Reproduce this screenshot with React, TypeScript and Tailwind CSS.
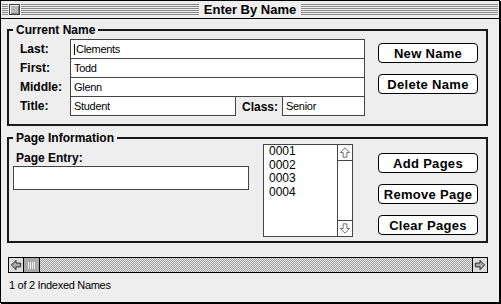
import React from 'react';

const labelCls = 'font-bold text-[12px] leading-[14px] text-black';
const valueCls = 'text-[11px] tracking-[-0.3px] text-black leading-none';

const MacButton: React.FC<{ label: string }> = ({ label }) => (
  <button
    type="button"
    className="w-[100px] h-[20px] bg-white border border-black rounded-[4px] font-bold text-[13px] tracking-[0.3px] leading-none text-black flex items-center justify-center"
  >
    {label}
  </button>
);

const GroupBox: React.FC<{ title: string; className: string; children: React.ReactNode }> = ({ title, className, children }) => (
  <fieldset className={`w-[481px] border-2 border-[#1a1a1a] ${className}`}>
    <legend className={`ml-[4px] px-[3px] ${labelCls}`}>{title}</legend>
    {children}
  </fieldset>
);

const Field: React.FC<{ value?: string; caret?: boolean; className: string }> = ({ value, caret, className }) => (
  <div className={`h-[20px] bg-white border border-[#444] flex items-center pl-[3px] ${className}`}>
    {caret && <span className="w-[1px] h-[11px] bg-black mr-[1px]" />}
    <span className={valueCls}>{value}</span>
  </div>
);

const HArrow: React.FC<{ dir: 'left' | 'right' }> = ({ dir }) => (
  <svg width="15" height="14" viewBox="0 0 15 14" className={dir === 'right' ? 'rotate-180' : ''}>
    <path d="M2.5 7 L7.5 2 L7.5 5 L12.5 5 L12.5 9 L7.5 9 L7.5 12 Z" fill="#a8a8a8" stroke="#222" strokeWidth="1" />
  </svg>
);

const VArrow: React.FC<{ dir: 'up' | 'down' }> = ({ dir }) => (
  <svg width="15" height="15" viewBox="0 0 15 15" className={dir === 'down' ? 'rotate-180' : ''}>
    <path d="M7.5 2.5 L12.5 7.5 L9.5 7.5 L9.5 12.5 L5.5 12.5 L5.5 7.5 L2.5 7.5 Z" fill="white" stroke="#666" strokeWidth="1" />
  </svg>
);

const stripes = 'h-[11px] bg-[repeating-linear-gradient(to_bottom,#8a8a8a_0px,#8a8a8a_1px,transparent_1px,transparent_2px)]';

export default function App() {
  return (
    <div className="w-[501px] h-[304px] bg-white font-['Liberation_Sans',Arial,sans-serif]">
      <div className="w-[500px] h-[303px] border border-black shadow-[1px_1px_0_#000] bg-[#eeeeee] flex flex-col">
        {/* title bar */}
        <div className="h-[18px] border-b border-black flex items-center px-[1px]">
          <div className="flex-1 flex items-center">
            <div className={`w-[6px] ${stripes}`} />
            <div className="px-[1px]">
              <div className="w-[11px] h-[11px] border border-[#444] bg-[#b8b8b8] shadow-[inset_1px_1px_0_#f4f4f4,inset_-1px_-1px_0_#7a7a7a]" />
            </div>
            <div className={`flex-1 ${stripes}`} />
          </div>
          <div className="px-[5px] font-bold text-[13px] leading-none text-black">Enter By Name</div>
          <div className={`flex-1 ${stripes}`} />
        </div>

        <div className="flex-1 flex flex-col pl-[6px]">
          <GroupBox title="Current Name" className="mt-[4px] h-[103px]">
            <div className="flex pt-[2px]">
              <div className="flex flex-col pl-[11px]">
                <div className="flex items-center">
                  <span className={`w-[50px] ${labelCls}`}>Last:</span>
                  <Field className="w-[295px]" value="Clements" caret />
                </div>
                <div className="flex items-center -mt-[1px]">
                  <span className={`w-[50px] ${labelCls}`}>First:</span>
                  <Field className="w-[295px]" value="Todd" />
                </div>
                <div className="flex items-center -mt-[1px]">
                  <span className={`w-[50px] ${labelCls}`}>Middle:</span>
                  <Field className="w-[295px]" value="Glenn" />
                </div>
                <div className="flex items-center -mt-[1px]">
                  <span className={`w-[50px] ${labelCls}`}>Title:</span>
                  <Field className="w-[166px]" value="Student" />
                  <span className={`w-[40px] ml-[6px] pt-[1px] ${labelCls}`}>Class:</span>
                  <Field className="w-[83px]" value="Senior" />
                </div>
              </div>
              <div className="flex flex-col gap-[11px] ml-[13px] mt-[4px]">
                <MacButton label="New Name" />
                <MacButton label="Delete Name" />
              </div>
            </div>
          </GroupBox>

          <GroupBox title="Page Information" className="mt-[5px] h-[112px]">
            <div className="flex">
              <div className="flex flex-col ml-[4px] mt-[6px]">
                <span className={`ml-[3px] ${labelCls}`}>Page Entry:</span>
                <div className="mt-[1px] w-[236px] h-[24px] bg-white border border-[#444]" />
              </div>
              <div className="ml-[14px] -mt-[1px] w-[90px] h-[93px] bg-white border border-[#444] flex">
                <div className="flex-1 pl-[5px] text-[12px] leading-[13.5px] text-black">
                  <div>0001</div>
                  <div>0002</div>
                  <div>0003</div>
                  <div>0004</div>
                </div>
                <div className="w-[15px] border-l border-[#444] flex flex-col justify-between">
                  <div className="h-[16px] border-b border-[#444] flex items-center justify-center">
                    <VArrow dir="up" />
                  </div>
                  <div className="h-[16px] border-t border-[#444] flex items-center justify-center">
                    <VArrow dir="down" />
                  </div>
                </div>
              </div>
              <div className="flex flex-col gap-[11px] ml-[25px] mt-[8px]">
                <MacButton label="Add Pages" />
                <MacButton label="Remove Page" />
                <MacButton label="Clear Pages" />
              </div>
            </div>
          </GroupBox>

          {/* horizontal scroll bar */}
          <div className="mt-[14px] ml-[1px] w-[480px] h-[16px] border border-black flex">
            <div className="w-[15px] border-r border-black bg-[#dcdcdc] flex items-center justify-center">
              <HArrow dir="left" />
            </div>
            <div className="w-[16px] border-r border-black bg-[#a9a9a9] flex items-center justify-center">
              <svg width="8" height="7" viewBox="0 0 8 7">
                <path d="M0.5 0 V7 M2.5 0 V7 M4.5 0 V7 M6.5 0 V7" stroke="#eee" strokeWidth="1" />
              </svg>
            </div>
            <div className="flex-1 bg-[conic-gradient(#a0a0a0_25%,#e6e6e6_0_50%,#a0a0a0_0_75%,#e6e6e6_0)] bg-[length:2px_2px]" />
            <div className="w-[15px] border-l border-black bg-[#dcdcdc] flex items-center justify-center">
              <HArrow dir="right" />
            </div>
          </div>

          <div className="mt-[5px] ml-[2px] text-[11px] tracking-[-0.3px] leading-[14px] text-black">1 of 2 Indexed Names</div>
        </div>
      </div>
    </div>
  );
}
